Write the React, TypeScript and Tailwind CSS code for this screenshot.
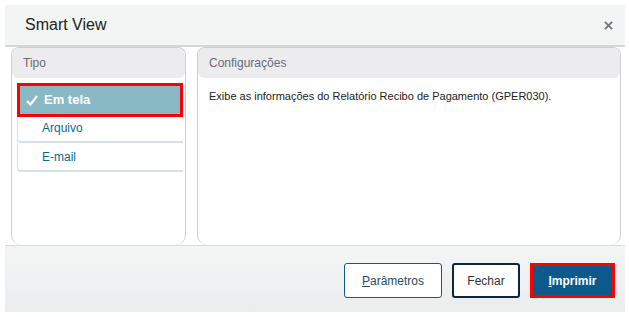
export default function App() {
  const items = [
    { label: "Em tela", selected: true, h: "" },
    { label: "Arquivo", selected: false, h: "h-[26px] pb-[2px]" },
    { label: "E-mail", selected: false, h: "h-[29px]" },
  ];

  return (
    <div
      className="w-[629px] h-[317px] bg-white pt-[5px] pl-[5px] pr-[4px] pb-[5px]"
      style={{ fontFamily: '"Liberation Sans", Arial, sans-serif' }}
    >
      <div className="flex flex-col h-full">
        {/* header */}
        <div className="h-[42px] shrink-0 bg-[#f3f4f4] border-b-2 border-[#d6d6d6] flex items-center justify-between pl-[20px] pr-[12px]">
          <span className="text-[16px] text-[#222]">Smart View</span>
          <svg width="9" height="9" viewBox="0 0 10 10" className="mt-[1px]">
            <path d="M1 1L9 9M9 1L1 9" stroke="#707580" strokeWidth="2" />
          </svg>
        </div>

        {/* body */}
        <div className="flex-1 flex gap-[11px] pl-[6px] pr-[4px]">
          <div className="w-[175px] border border-[#cfcfcf] border-b-0 rounded-t-[8px] rounded-b-[10px] flex flex-col bg-white overflow-hidden">
            <div className="h-[30px] bg-[#ececef] rounded-b-[6px] flex items-center pl-[11px] text-[12px] text-[#6b6b78]">
              Tipo
            </div>
            <div className="flex flex-col pt-[5px] pl-[5px] pr-[2px]">
              {items.map((item) =>
                item.selected ? (
                  <div
                    key={item.label}
                    className="h-[34px] border-[3px] border-[#ff0000] bg-[#89b9c5] flex items-center pl-[6px] gap-[6px]"
                  >
                    <svg width="12" height="11" viewBox="0 0 12 11">
                      <path d="M1 6L4.5 9.5L11 1" stroke="white" strokeWidth="2.2" fill="none" />
                    </svg>
                    <span className="text-[13px] font-bold text-white">{item.label}</span>
                  </div>
                ) : (
                  <div
                    key={item.label}
                    className={`${item.h} border-l border-b-2 border-[#d7e0e8] rounded-bl-[4px] flex items-center pl-[24px] text-[12px] text-[#0b6a8f]`}
                  >
                    {item.label}
                  </div>
                )
              )}
            </div>
          </div>

          <div className="flex-1 border border-[#cfcfcf] border-b-0 rounded-t-[8px] rounded-b-[10px] flex flex-col bg-white overflow-hidden">
            <div className="h-[30px] bg-[#ececef] rounded-b-[6px] flex items-center pl-[11px] text-[12px] text-[#6b6b78]">
              Configurações
            </div>
            <div className="pt-[10px] pl-[11px] text-[11px] text-[#222]">
              Exibe as informações do Relatório Recibo de Pagamento (GPER030).
            </div>
          </div>
        </div>

        {/* footer */}
        <div className="h-[67px] shrink-0 border-t border-[#d9d9d9] bg-gradient-to-b from-[#f4f5f5] to-[#ebecee] flex items-center justify-end gap-[10px] pr-[10px] pt-[3px]">
          <button className="w-[98px] h-[35px] border border-[#0c5d8c] rounded-[3px] bg-white text-[12px] text-[#2e4a5e]">
            <span className="underline">P</span>arâmetros
          </button>
          <button className="w-[68px] h-[35px] border-2 border-[#0b2740] rounded-[3px] bg-white text-[12px] text-[#333]">
            Fechar
          </button>
          <button className="w-[85px] h-[35px] border-[3px] border-[#ff0000] bg-[#0c5a8b] text-[12px] font-bold text-white">
            <span className="underline">I</span>mprimir
          </button>
        </div>
      </div>
    </div>
  );
}
